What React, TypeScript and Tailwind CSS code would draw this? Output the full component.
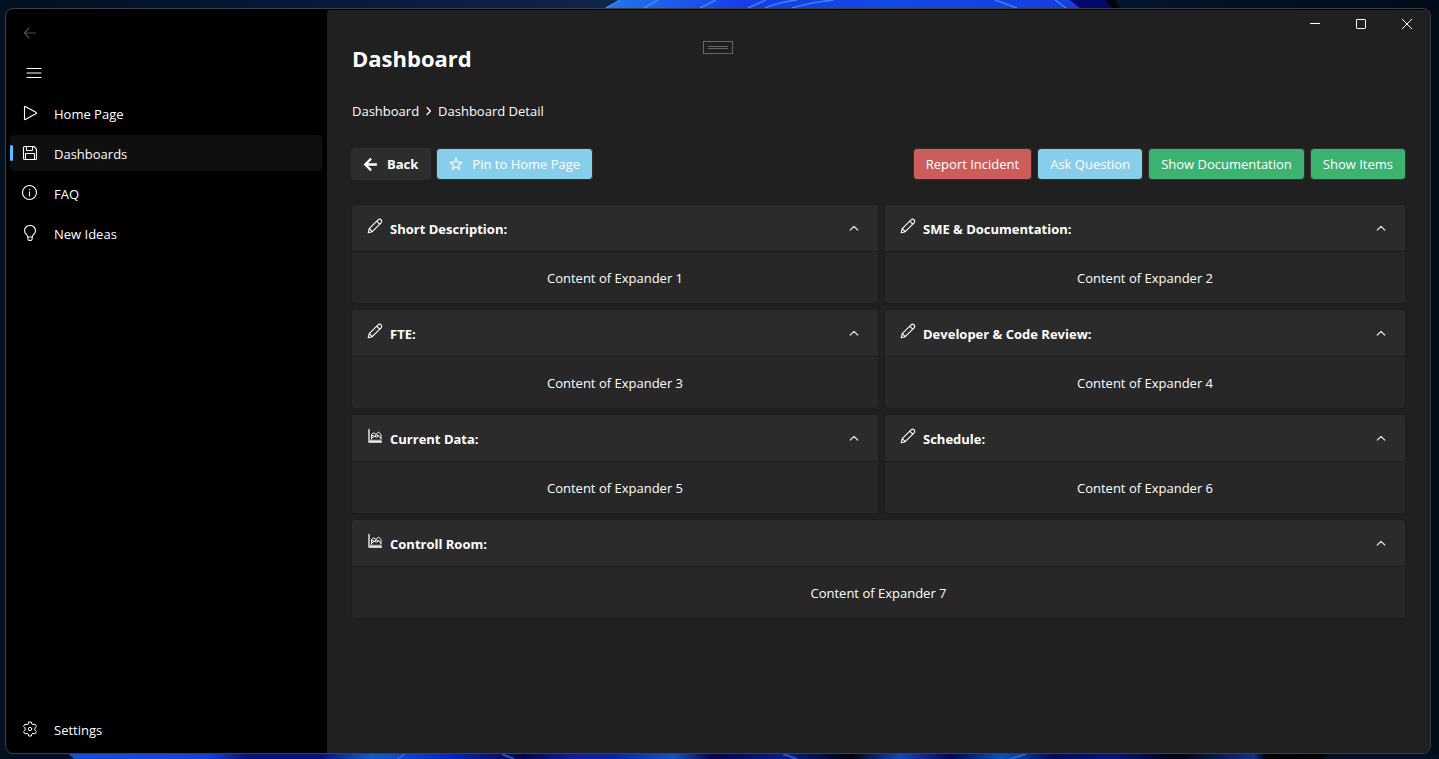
import { useState, type ReactNode } from "react";
import { FaArrowLeft } from "react-icons/fa";

const stroke = {
  fill: "none",
  stroke: "currentColor",
  strokeLinecap: "round" as const,
  strokeLinejoin: "round" as const,
};

function Icon({ children, size = 16, width = 1.1 }: { children: ReactNode; size?: number; width?: number }) {
  return (
    <svg width={size} height={size} viewBox="0 0 16 16" strokeWidth={width} aria-hidden="true" className="shrink-0" {...stroke}>
      {children}
    </svg>
  );
}

const PlayIcon = () => (
  <Icon>
    <path d="M2.5 1.9v12.2c0 .5.4.7.8.5l11-6c.4-.3.4-.8 0-1l-11-6.200c-.4-.2-.8 0-.8.5Z" />
  </Icon>
);

const SaveIcon = () => (
  <Icon>
    <path d="M2.600 1.500h9.200l2.700 2.700v9.200a1.100 1.100 0 0 1-1.100 1.100H2.600a1.100 1.100 0 0 1-1.100-1.100V2.600a1.100 1.100 0 0 1 1.100-1.100Z" />
    <path d="M4.500 1.500v3.400c0 .4.200.6.600.6h4.800c.4 0 .6-.2.600-.6V1.500M3.500 14.500V9.100c0-.4.200-.6.600-.6h7.800c.4 0 .6.200.6.6v5.400" />
  </Icon>
);

const InfoIcon = () => (
  <Icon>
    <circle cx="7.500" cy="7.500" r="7" />
    <path d="M7.500 6.800v4.200" />
    <circle cx="7.500" cy="4.700" r=".4" fill="currentColor" strokeWidth=".5" />
  </Icon>
);

const BulbIcon = () => (
  <Icon>
    <path d="M5.600 11.500C5.300 9.700 2.500 8.700 2.500 5.700a5.500 5.200 0 0 1 11 0c0 3-2.800 4-3.100 5.800l-.4 2.900c-.1.600-.5 1-1.100 1H7.100c-.6 0-1-.4-1.100-1ZM5.700 12h4.600" />
  </Icon>
);

const GearIcon = () => (
  <Icon width={1}>
    <path d="M6.700 1h2.600l.5 2 1.200.7 2-.6 1.400 2.300-1.500 1.500v2.200l1.500 1.500-1.400 2.300-2-.6-1.200.7-.5 2H6.700l-.5-2-1.200-.7-2 .6-1.400-2.300 1.500-1.500V6.900L1.600 5.400 3 3.100l2 .6L6.200 3Z" />
    <circle cx="8" cy="8" r="1.700" />
  </Icon>
);

const PencilIcon = () => (
  <Icon>
    <path d="M1.200 14.800l1-4.100 8.900-8.900a2.100 2.100 0 0 1 3 3l-8.900 8.900ZM9.700 3.200l3 3M2.300 10.700l3 3" />
  </Icon>
);

const ChartIcon = () => (
  <Icon width={1}>
    <path d="M2 1.500V14h12.500" strokeWidth="1.300" />
    <path d="M3 12.700h11.500" strokeWidth="2" opacity=".65" strokeLinecap="butt" />
    <path d="M4.500 11V6.500l2-1.700L9 6.400l2.600-2.300L14 6.500V11M4.600 10l2.700-1.600 2.400.9 1.800-1.400 2.400 2.300M4.700 7.100l2.700 1.200 1.900-1.200 2.500.8" />
  </Icon>
);

const StarIcon = () => (
  <Icon size={14} width={1.3}>
    <path d="M8 1.300l1.700 4.600 5 .2-3.900 3.100 1.300 4.900L8 11.300l-4.100 2.800 1.300-4.900-3.900-3.100 5-.2Z" />
  </Icon>
);

type NavItemProps = { icon: ReactNode; label: string; active?: boolean };

function NavItem({ icon, label, active }: NavItemProps) {
  return (
    <a
      href="#"
      aria-current={active ? "page" : undefined}
      className={`relative flex h-9 items-center gap-4 rounded pl-3 ${active ? "bg-[#0f0f0f]" : ""}`}
    >
      {active && <span className="absolute left-0 h-4 w-[3px] rounded-full bg-[#4cc2ff]" />}
      {icon}
      <span className="pt-px">{label}</span>
    </a>
  );
}

type ExpanderProps = { icon: ReactNode; title: string; children: ReactNode; wide?: boolean };

function Expander({ icon, title, children, wide }: ExpanderProps) {
  const [open, setOpen] = useState(true);
  return (
    <section className={`overflow-hidden rounded border border-[#1d1d1d] bg-[#272727] ${wide ? "col-span-2" : ""}`}>
      <button
        type="button"
        aria-expanded={open}
        onClick={() => setOpen(!open)}
        className="flex h-[46px] w-full items-center justify-between bg-[#2b2b2b] pr-[18px] pl-[15px]"
      >
        <span className="flex items-center gap-[7px] font-bold">
          <span className="pb-1">{icon}</span>
          <span className="pt-px">{title}</span>
        </span>
        <svg width="12" height="12" viewBox="0 0 12 12" strokeWidth="1.200" aria-hidden="true" className={open ? "text-[#e0e0e0]" : "rotate-180 text-[#e0e0e0]"} {...stroke}>
          <path d="M2.300 8L6 4.300 9.700 8" />
        </svg>
      </button>
      {open && <div className="flex h-[52px] items-center justify-center border-t border-[#1d1d1d] pt-px">{children}</div>}
    </section>
  );
}

function ActionButton({ color, children }: { color: string; children: ReactNode }) {
  return (
    <button type="button" className={`flex h-8 items-center gap-[9px] rounded border border-[#303030] px-3 text-white ${color}`}>
      {children}
    </button>
  );
}

function Wallpaper() {
  return (
    <>
      <svg className="absolute inset-x-0 top-0 h-2 w-full" viewBox="0 0 1439 8" preserveAspectRatio="none" aria-hidden="true">
        <defs>
          <linearGradient id="skyTop">
            <stop offset="0" stopColor="#03101f" />
            <stop offset=".2" stopColor="#06183a" />
            <stop offset=".45" stopColor="#11264f" />
            <stop offset=".8" stopColor="#04142b" />
            <stop offset="1" stopColor="#010a18" />
          </linearGradient>
          <linearGradient id="bloomTop">
            <stop offset="0" stopColor="#2377ec" />
            <stop offset=".3" stopColor="#173ce8" />
            <stop offset=".6" stopColor="#1249e6" />
            <stop offset="1" stopColor="#173de0" />
          </linearGradient>
        </defs>
        <path d="M0 0h1439v8H0z" fill="url(#skyTop)" />
        <path d="M606 8l14-8h450l10 8z" fill="url(#bloomTop)" />
        <path d="M1070 0h42l6 8h-38z" fill="#03096b" />
        <path d="M1106 0h9l5 8h-8z" fill="#000208" />
        <g fill="none" stroke="#4c9ff4" strokeWidth="1.500" opacity=".75">
          <path d="M606 8l14-8M644 8l14-8M700 8l16-8M748 8l18-8M765 8q14-6 32-8M792 8q20-6 42-8M995 0l22 8M1055 0l11 8" />
        </g>
      </svg>
      <svg className="absolute inset-x-0 bottom-0 h-[5px] w-full" viewBox="0 0 1439 5" preserveAspectRatio="none" aria-hidden="true">
        <defs>
          <linearGradient id="bloomBottom">
            <stop offset="0" stopColor="#1550cf" />
            <stop offset=".11" stopColor="#1741d0" />
            <stop offset=".14" stopColor="#06127e" />
            <stop offset=".2" stopColor="#06127e" />
            <stop offset=".24" stopColor="#1659cc" />
            <stop offset=".3" stopColor="#0728ba" />
            <stop offset=".36" stopColor="#02044c" />
            <stop offset=".4" stopColor="#111da0" />
            <stop offset=".43" stopColor="#0620a5" />
            <stop offset=".48" stopColor="#1750c8" />
            <stop offset=".51" stopColor="#03044c" />
            <stop offset=".57" stopColor="#071c8c" />
            <stop offset=".62" stopColor="#000108" />
            <stop offset=".66" stopColor="#1544c0" />
            <stop offset=".7" stopColor="#020452" />
            <stop offset=".74" stopColor="#0752c0" />
            <stop offset=".78" stopColor="#030b60" />
            <stop offset=".83" stopColor="#03147a" />
            <stop offset=".88" stopColor="#00020f" />
            <stop offset=".94" stopColor="#102f86" />
            <stop offset=".95" stopColor="#000105" />
            <stop offset="1" stopColor="#000208" />
          </linearGradient>
        </defs>
        <path d="M0 0h1439v5H0z" fill="#031024" />
        <path d="M69 0h1260l-8 5H74z" fill="url(#bloomBottom)" />
        <path d="M397 5l8-5M502 0l12 5M783 0l14 5M1010 5l16-5" fill="none" stroke="#3a70e8" strokeWidth="2" opacity=".7" />
      </svg>
    </>
  );
}

export default function App() {
  return (
    <div className="relative flex min-h-screen bg-linear-to-r from-[#03101f] to-[#010b1a] pt-2 pr-2 pb-[5px] pl-[5px] font-['Open_Sans','Noto_Sans',sans-serif] text-[13px] leading-5 text-white">
      <Wallpaper />
      <div className="relative flex min-w-0 flex-1 overflow-hidden rounded-lg border border-[#3a414c] bg-black">
        <aside className="flex w-[321px] shrink-0 flex-col pr-[5px] pb-[6px] pl-1">
          <button type="button" disabled aria-label="Back" className="flex h-12 w-10 items-center justify-center text-[#4c4c4c]">
            <Icon>
              <path d="M13.500 8H2.500M7.200 3L2.200 8l5 5" />
            </Icon>
          </button>
          <button type="button" aria-label="Toggle navigation" className="ml-1 flex h-8 w-10 items-center justify-center">
            <svg width="16" height="12" viewBox="0 0 16 12" strokeWidth="1" aria-hidden="true" {...stroke}>
              <path d="M1 1.500h14M1 6h14M1 10.500h14" />
            </svg>
          </button>
          <nav className="flex flex-1 flex-col gap-1 pt-[6px]">
            <NavItem icon={<PlayIcon />} label="Home Page" />
            <NavItem icon={<SaveIcon />} label="Dashboards" active />
            <NavItem icon={<InfoIcon />} label="FAQ" />
            <NavItem icon={<BulbIcon />} label="New Ideas" />
            <div className="mt-auto">
              <NavItem icon={<GearIcon />} label="Settings" />
            </div>
          </nav>
        </aside>

        <main className="mt-px flex min-w-0 flex-1 flex-col rounded-tl bg-[#202020]">
          <div className="flex h-7 justify-end">
            <button type="button" aria-label="Minimize" className="flex w-[46px] items-center justify-center">
              <svg width="10" height="10" viewBox="0 0 10 10" {...stroke} strokeLinecap="butt">
                <path d="M0 4.500h10" />
              </svg>
            </button>
            <button type="button" aria-label="Maximize" className="flex w-[46px] items-center justify-center">
              <svg width="10" height="10" viewBox="0 0 10 10" {...stroke}>
                <rect x=".5" y=".5" width="9" height="9" rx=".6" />
              </svg>
            </button>
            <button type="button" aria-label="Close" className="flex w-[46px] items-center justify-center">
              <svg width="10" height="10" viewBox="0 0 10 10" {...stroke}>
                <path d="M0 0l10 10M10 0L0 10" />
              </svg>
            </button>
          </div>

          <div className="px-6">
            <h1 className="pt-1 pl-px text-[22px] leading-8 font-bold">Dashboard</h1>

            <nav aria-label="Breadcrumb" className="mt-[27px] flex items-center gap-[6px] pl-px">
              <a href="#">Dashboard</a>
              <svg width="7" height="10" viewBox="0 0 7 10" strokeWidth="1.200" aria-hidden="true" {...stroke}>
                <path d="M2 1.500L5.500 5 2 8.500" />
              </svg>
              <a href="#">Dashboard Detail</a>
            </nav>

            <div className="mt-[27px] flex items-center justify-between">
              <div className="flex gap-[5px]">
                <button type="button" className="flex h-8 items-center gap-[9px] rounded border border-[#303030] bg-[#2d2d2d] pr-3 pl-[11px] font-bold">
                  <FaArrowLeft size={15} aria-hidden="true" />
                  Back
                </button>
                <ActionButton color="bg-[#87ceeb]">
                  <StarIcon />
                  Pin to Home Page
                </ActionButton>
              </div>
              <div className="flex gap-[5px]">
                <ActionButton color="bg-[#cd5c5c]">Report Incident</ActionButton>
                <ActionButton color="bg-[#87ceeb]">Ask Question</ActionButton>
                <ActionButton color="bg-[#3cb371]">Show Documentation</ActionButton>
                <ActionButton color="bg-[#3cb371]">Show Items</ActionButton>
              </div>
            </div>

            <div className="mt-6 grid grid-cols-[528fr_522fr] items-start gap-[5px]">
              <Expander icon={<PencilIcon />} title="Short Description:">Content of Expander 1</Expander>
              <Expander icon={<PencilIcon />} title="SME & Documentation:">Content of Expander 2</Expander>
              <Expander icon={<PencilIcon />} title="FTE:">Content of Expander 3</Expander>
              <Expander icon={<PencilIcon />} title="Developer & Code Review:">Content of Expander 4</Expander>
              <Expander icon={<ChartIcon />} title="Current Data:">Content of Expander 5</Expander>
              <Expander icon={<PencilIcon />} title="Schedule:">Content of Expander 6</Expander>
              <Expander icon={<ChartIcon />} title="Controll Room:" wide>
                Content of Expander 7
              </Expander>
            </div>
          </div>
        </main>

        <div className="absolute top-8 left-1/2 flex h-[13px] w-[30px] -translate-x-1/2 flex-col items-center justify-center gap-px border border-[#666]">
          <span className="h-px w-5 bg-[#666]" />
          <span className="h-px w-5 bg-[#666]" />
        </div>
      </div>
    </div>
  );
}
